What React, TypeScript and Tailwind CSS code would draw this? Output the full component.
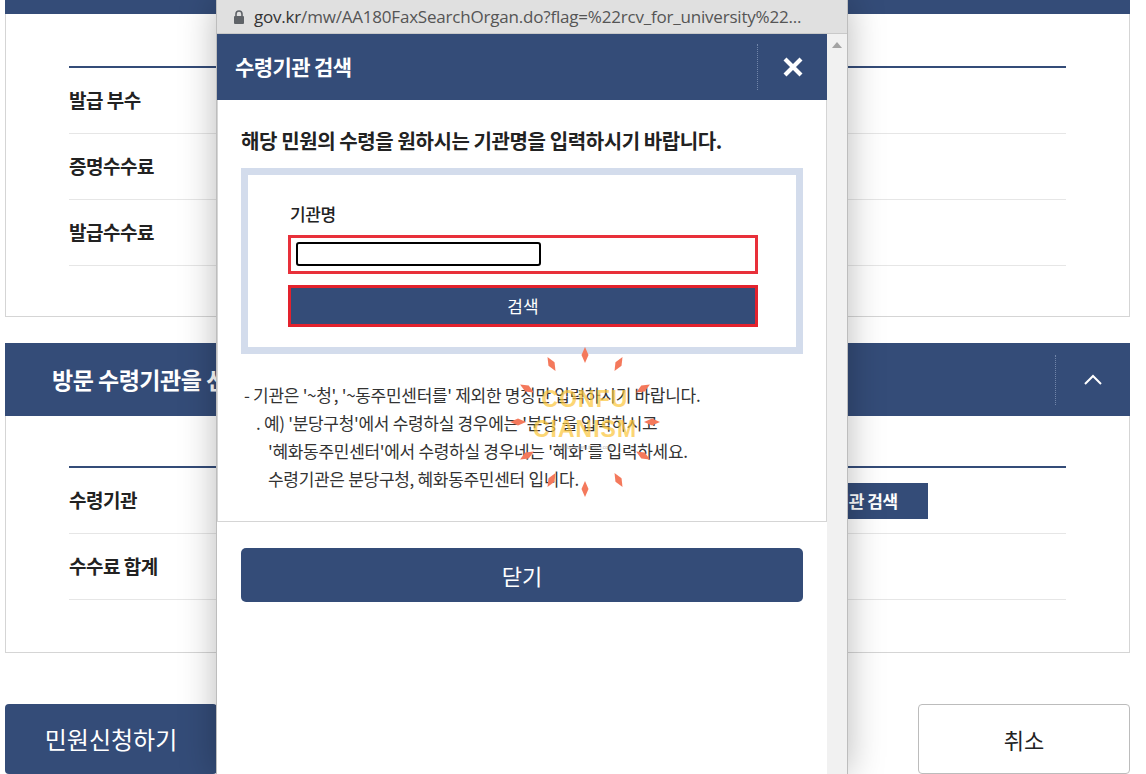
import React from "react";

const BLUE = "bg-[#344c78]";

function Row({ label, children }: { label: string; children?: React.ReactNode }) {
  return (
    <div className="flex h-[66px] items-center border-b border-[#e6e6e6]">
      <span className="w-[704px] text-[19px] font-bold tracking-[-0.5px] text-[#222]">{label}</span>
      {children}
    </div>
  );
}

function Spinner() {
  const items = Array.from({ length: 12 }, (_, i) => i * 30);
  return (
    <svg width="160" height="160" viewBox="0 0 160 160">
      {items.map((deg) => (
        <path
          key={deg}
          d="M80 5 L83.5 13 L80 21 L76.5 13 Z"
          fill="#f4795c"
          transform={`rotate(${deg} 80 80)`}
        />
      ))}
    </svg>
  );
}

function Popup() {
  return (
    <div className="absolute left-[216px] top-0 flex h-[774px] w-[632px] flex-col border-x border-[#bdbdbd] bg-white shadow-[0_0_34px_rgba(0,0,0,0.28)]">
      {/* address bar */}
      <div className="flex h-[34px] shrink-0 items-center gap-[9px] border-b border-[#c9c9c9] bg-[#e0e0e0] pl-[16px] font-['Open_Sans',sans-serif] text-[17px]">
        <svg width="12" height="14" viewBox="0 0 12 14">
          <path d="M3 6 V4 a3 3 0 0 1 6 0 V6" fill="none" stroke="#5f6368" strokeWidth="1.6" />
          <rect x="1" y="6" width="10" height="8" rx="1" fill="#5f6368" />
        </svg>
        <span className="whitespace-nowrap tracking-[-0.2px] text-[#555]">
          <span className="text-[#333]">gov.kr</span>/mw/AA180FaxSearchOrgan.do?flag=%22rcv_for_university%22...
        </span>
      </div>

      <div className="relative flex flex-1">
        <div className="flex w-[611px] flex-col">
          {/* header */}
          <div className={`flex h-[66px] shrink-0 items-center ${BLUE}`}>
            <h2 className="flex-1 pl-[18px] text-[21px] font-bold tracking-[-0.6px] text-white">수령기관 검색</h2>
            <div className="flex h-[46px] w-[70px] items-center justify-center border-l border-dotted border-[#7185a9]">
              <svg width="22" height="22" viewBox="0 0 22 22">
                <path d="M3 3 L19 19 M19 3 L3 19" stroke="#fff" strokeWidth="4.2" />
              </svg>
            </div>
          </div>

          {/* body */}
          <div className="h-[422px] border-x border-b border-[#d5d5d5] px-[23px] pt-[26px]">
            <p className="text-[20px] font-bold tracking-[-0.4px] text-[#222]">
              해당 민원의 수령을 원하시는 기관명을 입력하시기 바랍니다.
            </p>
            <div className="mt-[12px] w-[562px] border-[7px] border-[#d3dcec] pb-[20px] pl-[40px] pt-[26px]">
              <label className="block pl-[2px] text-[17px] font-medium tracking-[-0.4px] text-[#222]">기관명</label>
              <div className="mt-[8px] flex h-[39px] w-[470px] items-center border-[3px] border-[#e8303a] pl-[5px]">
                <input className="h-[24px] w-[245px] rounded-[3px] border-2 border-black bg-white outline-none" />
              </div>
              <button className={`mt-[11px] h-[42px] w-[470px] border-[3px] border-[#e3222d] ${BLUE} text-[17px] text-white`}>
                검색
              </button>
            </div>
            <div className="mt-[27px] text-[17px] leading-[28px] tracking-[-0.3px] text-[#333]">
              <p className="pl-[3px]">- 기관은 '~청', '~동주민센터를' 제외한 명칭만 입력하시기 바랍니다.</p>
              <p className="pl-[15px]">. 예) '분당구청'에서 수령하실 경우에는 '분당'을 입력하시고</p>
              <p className="pl-[27px]">'혜화동주민센터'에서 수령하실 경우네는 '혜화'를 입력하세요.</p>
              <p className="pl-[27px]">수령기관은 분당구청, 혜화동주민센터 입니다.</p>
            </div>
          </div>

          <div className="px-[24px] pt-[26px]">
            <button className={`h-[54px] w-[562px] rounded-[5px] ${BLUE} text-[22px] text-white`}>닫기</button>
          </div>
        </div>

        {/* scrollbar */}
        <div className="flex w-[20px] justify-center bg-[#f1f1f1] pt-[8px]">
          <svg width="10" height="6" viewBox="0 0 10 6">
            <path d="M0 6 L5 0 L10 6 Z" fill="#a3a3a3" />
          </svg>
        </div>

        {/* loading overlay */}
        <div className="absolute left-[288px] top-[308px]">
          <Spinner />
        </div>
        <div className="absolute left-[313px] top-[350px] w-[110px] text-center font-['Liberation_Sans',sans-serif] text-[23px] font-bold leading-[30px] tracking-[1px] text-[#fcc63a] opacity-70">
          <div>CONFU</div>
          <div>CIANISM</div>
          <div className="text-[5px] font-normal leading-[6px] tracking-normal text-[#999]">confucianism.tistory.com</div>
        </div>
      </div>
    </div>
  );
}

export default function App() {
  return (
    <div className="relative h-[774px] w-[1146px] overflow-hidden bg-white font-['Noto_Sans_CJK_KR',sans-serif]">
      <div className="w-[1130px] pl-[5px]">
        {/* card 1 */}
        <div className={`h-[14px] ${BLUE}`} />
        <div className="border-x border-b border-[#d5d5d5] px-[63px] pb-[50px] pt-[52px]">
          <div className="border-t-2 border-[#344c78]">
            <Row label="발급 부수" />
            <Row label="증명수수료" />
            <Row label="발급수수료" />
          </div>
        </div>

        {/* card 2 */}
        <div className={`mt-[26px] flex h-[73px] items-center ${BLUE}`}>
          <h3 className="flex-1 pl-[47px] text-[23px] font-semibold tracking-[-0.5px] text-white">방문 수령기관을 선택하세요</h3>
          <div className="flex h-[50px] w-[75px] items-center justify-center border-l border-dotted border-[#7185a9]">
            <svg width="20" height="12" viewBox="0 0 20 12">
              <path d="M2 10 L10 2 L18 10" fill="none" stroke="#fff" strokeWidth="2" />
            </svg>
          </div>
        </div>
        <div className="border-x border-b border-[#d5d5d5] px-[63px] pb-[52px] pt-[50px]">
          <div className="border-t-2 border-[#344c78]">
            <Row label="수령기관">
              <button className={`h-[36px] w-[155px] ${BLUE} text-[17px] font-bold tracking-[-0.5px] text-white`}>
                수령기관 검색
              </button>
            </Row>
            <Row label="수수료 합계" />
          </div>
        </div>

        {/* bottom buttons */}
        <div className="mt-[51px] flex justify-between">
          <button className={`h-[70px] w-[212px] rounded-[4px] ${BLUE} text-[24px] text-white`}>민원신청하기</button>
          <button className="h-[70px] w-[212px] rounded-[4px] border border-[#bcbcbc] bg-white text-[22px] text-[#222]">
            취소
          </button>
        </div>
      </div>
      <Popup />
    </div>
  );
}
